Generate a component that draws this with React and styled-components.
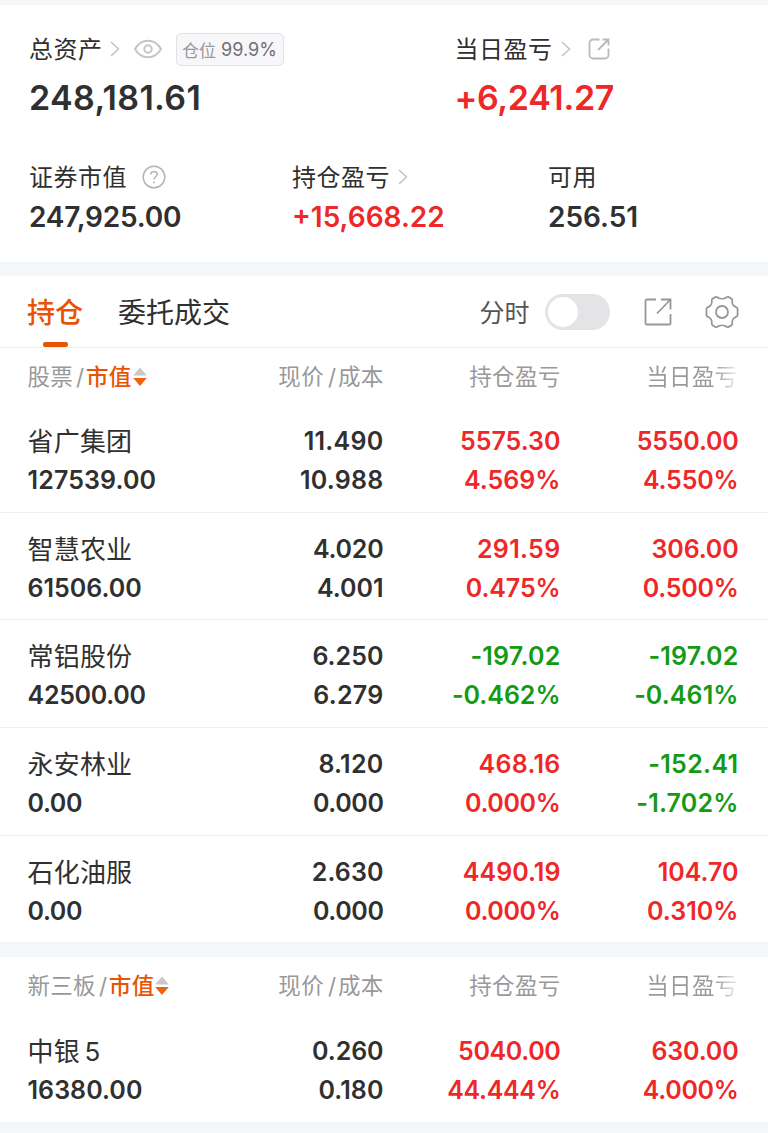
import React from "react";
import styled, { createGlobalStyle } from "styled-components";

const GlobalStyle = createGlobalStyle`
  * { box-sizing: border-box; }
  body {
    margin: 0;
    background: #f4f7f9;
    color: #303030;
    font-family: Inter, "Noto Sans CJK SC", sans-serif;
  }
  svg { display: block; flex: none; }
`;

const colors = { up: "#ee2829", down: "#159a15", flat: "#303030" };

const Screen = styled.main`
  width: 768px;
  height: 1133px;
  padding-top: 5px;
  overflow: hidden;
`;

const Summary = styled.section`
  height: 257px;
  padding: 24px 30px 0 29px;
  background: #fff;
`;

const SummaryRow = styled.div`
  display: grid;
  grid-template-columns: ${(p) => p.$columns};
  margin-bottom: ${(p) => p.$gap || 0}px;
`;

const Label = styled.div`
  display: flex;
  align-items: center;
  height: 40px;
  font-size: 24px;
  letter-spacing: 0.5px;
  white-space: nowrap;
`;

const LabelText = styled.span`
  padding-bottom: ${(p) => p.$lift || 3}px;
`;

const IconSlot = styled.span`
  margin-left: ${(p) => p.$space}px;
`;

const Amount = styled.div`
  height: ${(p) => (p.$large ? 58 : 40)}px;
  line-height: ${(p) => (p.$large ? 58 : 41)}px;
  font-size: ${(p) => (p.$large ? 34 : 28)}px;
  letter-spacing: ${(p) => p.$spacing || 0}px;
  font-weight: 600;
  color: ${(p) => colors[p.$tone || "flat"]};
`;

const Badge = styled.span`
  display: flex;
  align-items: center;
  justify-content: center;
  gap: 5px;
  width: 108px;
  height: 33px;
  margin-left: 14px;
  border: 1px solid #e2e2e6;
  border-radius: 5px;
  background: #f7f7fa;
  color: #999;
  font-size: 17px;
  letter-spacing: 0;
`;

const BadgeValue = styled.span`
  color: #707070;
  font-size: 18px;
`;

const Panel = styled.section`
  margin-top: ${(p) => p.$top}px;
  background: #fff;
`;

const TabBar = styled.div`
  display: flex;
  height: 72px;
  padding: 0 29px 0 27px;
  border-bottom: 1px solid #eeeff0;
`;

const Tab = styled.div`
  display: flex;
  flex-direction: column;
  align-items: center;
  justify-content: space-between;
  height: 71px;
  margin-right: 35px;
  font-size: 28px;
  line-height: 74px;
  font-weight: ${(p) => (p.$active ? 500 : 400)};
  color: ${(p) => (p.$active ? "#e85404" : "#303030")};
  &::after {
    content: "";
    display: ${(p) => (p.$active ? "block" : "none")};
    width: 25px;
    height: 5px;
    flex: none;
    border-radius: 2px;
    background: #e85404;
  }
`;

const TabText = styled.span`
  height: 66px;
`;

const Tools = styled.div`
  display: flex;
  align-items: center;
  margin-left: auto;
  color: #555;
  font-size: 25px;
`;

const Switch = styled.span`
  display: flex;
  width: 65px;
  height: 36px;
  margin: 0 34px 0 15px;
  padding: 3px;
  border-radius: 18px;
  background: #e4e4e6;
`;

const Knob = styled.span`
  width: 30px;
  height: 30px;
  border-radius: 50%;
  background: #fff;
`;

const Columns = styled.div`
  display: grid;
  grid-template-columns: 184px 172px 177px 178px;
  padding-left: 27.5px;
`;

const TableHead = styled(Columns)`
  height: ${(p) => (p.$tall ? 58 : 57)}px;
  line-height: 58px;
  color: #999;
  font-size: 22.5px;
  letter-spacing: 0.3px;
`;

const HeadCell = styled.div`
  display: flex;
  align-items: center;
  justify-content: ${(p) => (p.$start ? "flex-start" : "flex-end")};
  white-space: nowrap;
`;

const Slash = styled.span`
  margin: 0 1.5px 0 ${(p) => p.$gap || 3}px;
`;

const SortKey = styled.span`
  margin-right: 1px;
  color: #e85404;
  font-weight: 500;
`;

const Faded = styled.span`
  margin-right: 1px;
  background: linear-gradient(to right, #999 74%, rgba(153, 153, 153, 0.15) 100%);
  background-clip: text;
  color: transparent;
`;

const StockRow = styled(Columns)`
  height: ${(p) => (p.$last ? 106.7 : 107.7)}px;
  padding-top: 17px;
  border-bottom: ${(p) => (p.$last ? "none" : "1px solid #f0f1f2")};
`;

const Cell = styled.div`
  color: ${(p) => colors[p.$tone || "flat"]};
  text-align: ${(p) => (p.$start ? "left" : "right")};
  font-size: 25px;
  font-weight: 600;
  white-space: nowrap;
`;

const Line = styled.div`
  height: 39px;
  line-height: 39px;
  letter-spacing: ${(p) => p.$spacing || 0}px;
`;

const StockName = styled(Line)`
  font-size: 26px;
  font-weight: 400;
  letter-spacing: 0.2px;
  word-spacing: -3px;
`;

const Chevron = () => (
  <svg width="10" height="16" viewBox="0 0 10 16" fill="none" stroke="#c2c2c2" strokeWidth="1.5">
    <path d="M1 1l7.5 7L1 15" />
  </svg>
);

const Eye = () => (
  <svg width="28" height="20" viewBox="0 0 28 20" fill="none" stroke="#c5c5c5" strokeWidth="2">
    <path d="M1 10C4 4.7 8.6 1.7 14 1.7S24 4.7 27 10C24 15.300 19.400 18.300 14 18.300S4 15.300 1 10Z" />
    <circle cx="14" cy="10" r="3.700" />
  </svg>
);

const RoundedShare = () => (
  <svg width="22" height="22" viewBox="0 0 22 22" fill="none" stroke="#bababa" strokeWidth="1.8">
    <path d="M11.500 1.500H5A3.500 3.500 0 0 0 1.500 5v12A3.500 3.500 0 0 0 5 20.500h12a3.500 3.500 0 0 0 3.500-3.500v-6.500M14.500 1.500h6v6M20.500 1.500L10 12" />
  </svg>
);

const Help = () => (
  <svg width="24" height="24" viewBox="0 0 24 24" fill="none" stroke="#b5b5b5" strokeWidth="1.5">
    <circle cx="12" cy="12" r="10.800" />
    <path d="M8.800 9.500C8.800 7.500 10.200 6.400 12 6.400s3.200 1.100 3.200 2.900c0 2.400-3.200 2.500-3.200 5.200" />
    <circle cx="12" cy="17.200" r="1" fill="#b5b5b5" stroke="none" />
  </svg>
);

const Share = () => (
  <svg width="28" height="28" viewBox="0 0 28 28" fill="none" stroke="#979797" strokeWidth="1.800">
    <path d="M12 1.500H3a1.500 1.500 0 0 0-1.500 1.500v22A1.500 1.500 0 0 0 3 26.500h22.500A1 1 0 0 0 26.500 25.500V16M17 1.500h9.500v10M26 2L13 15.500" />
  </svg>
);

const Gear = () => (
  <svg width="34" height="34" viewBox="0 0 34 34" fill="none" stroke="#979797" strokeWidth="1.8" strokeLinejoin="round">
    <path d="M12.300 2.200C15 4.200 19 4.200 21.700 2.200Q22.700 1.500 23.700 2.100L26.300 3.600Q27.400 4.300 27.200 5.500C26.800 8.500 28.600 11.500 31.400 12.400Q32.600 12.900 32.600 14V20Q32.600 21.100 31.400 21.600C28.600 22.500 26.800 25.500 27.200 28.500Q27.400 29.700 26.300 30.400L23.700 31.900Q22.700 32.500 21.700 31.800C19 29.800 15 29.800 12.300 31.800Q11.300 32.500 10.300 31.900L7.700 30.400Q6.600 29.700 6.800 28.500C7.200 25.500 5.400 22.500 2.600 21.600Q1.400 21.100 1.400 20V14Q1.400 12.900 2.600 12.400C5.400 11.500 7.200 8.500 6.800 5.500Q6.600 4.300 7.700 3.600L10.300 2.100Q11.300 1.500 12.300 2.200Z" />
    <circle cx="17" cy="17" r="6" />
  </svg>
);

const Sort = () => (
  <svg width="14" height="20" viewBox="0 0 14 20">
    <path d="M7 .5L13.800 8.500H.2Z" fill="#c8c8c8" />
    <path d="M.2 11h13.600L7 19Z" fill="#f0630c" />
  </svg>
);

const Heading = ({ name, tall }) => (
  <TableHead $tall={tall}>
    <HeadCell $start>
      {name}
      <Slash>/</Slash>
      <SortKey>市值</SortKey>
      <Sort />
    </HeadCell>
    <HeadCell>现价<Slash $gap={4}>/</Slash>成本</HeadCell>
    <HeadCell>持仓盈亏</HeadCell>
    <HeadCell><Faded>当日盈亏</Faded></HeadCell>
  </TableHead>
);

const tracking = { 0: -0.8, 1: 0.8, 4: -0.7, 5: -0.3, "%": -0.4 };

const Figure = ({ children }) => {
  const total = [...children].reduce((sum, ch) => sum + (tracking[ch] || 0), 0);
  return <Line $spacing={0.25 + total / children.length}>{children}</Line>;
};

const Stock = ({ data, last }) => {
  const [name, value, price, cost, gain, gainRate, gainTone, day, dayRate, dayTone] = data;
  return (
    <StockRow $last={last}>
      <Cell $start>
        <StockName>{name}</StockName>
        <Figure>{value}</Figure>
      </Cell>
      <Cell><Figure>{price}</Figure><Figure>{cost}</Figure></Cell>
      <Cell $tone={gainTone}><Figure>{gain}</Figure><Figure>{gainRate}</Figure></Cell>
      <Cell $tone={dayTone}><Figure>{day}</Figure><Figure>{dayRate}</Figure></Cell>
    </StockRow>
  );
};

const stocks = [
  ["省广集团", "127539.00", "11.490", "10.988", "5575.30", "4.569%", "up", "5550.00", "4.550%", "up"],
  ["智慧农业", "61506.00", "4.020", "4.001", "291.59", "0.475%", "up", "306.00", "0.500%", "up"],
  ["常铝股份", "42500.00", "6.250", "6.279", "-197.02", "-0.462%", "down", "-197.02", "-0.461%", "down"],
  ["永安林业", "0.00", "8.120", "0.000", "468.16", "0.000%", "up", "-152.41", "-1.702%", "down"],
  ["石化油服", "0.00", "2.630", "0.000", "4490.19", "0.000%", "up", "104.70", "0.310%", "up"],
];
const neeq = ["中银 5", "16380.00", "0.260", "0.180", "5040.00", "44.444%", "up", "630.00", "4.000%", "up"];

export default function App() {
  return (
    <Screen>
      <GlobalStyle />
      <Summary>
        <SummaryRow $columns="425.5px 1fr" $gap={30}>
          <div>
            <Label>
              <LabelText>总资产</LabelText>
              <IconSlot $space={7}><Chevron /></IconSlot>
              <IconSlot $space={14}><Eye /></IconSlot>
              <Badge>仓位<BadgeValue>99.9%</BadgeValue></Badge>
            </Label>
            <Amount $large $spacing={0.35}>248,181.61</Amount>
          </div>
          <div>
            <Label>
              <LabelText>当日盈亏</LabelText>
              <IconSlot $space={8}><Chevron /></IconSlot>
              <IconSlot $space={17}><RoundedShare /></IconSlot>
            </Label>
            <Amount $large $tone="up" $spacing={-0.35}>+6,241.27</Amount>
          </div>
        </SummaryRow>
        <SummaryRow $columns="263px 256px 1fr">
          <div>
            <Label><LabelText>证券市值</LabelText><IconSlot $space={15}><Help /></IconSlot></Label>
            <Amount $spacing={-0.2}>247,925.00</Amount>
          </div>
          <div>
            <Label><LabelText>持仓盈亏</LabelText><IconSlot $space={8}><Chevron /></IconSlot></Label>
            <Amount $tone="up">+15,668.22</Amount>
          </div>
          <div>
            <Label><LabelText>可用</LabelText></Label>
            <Amount>256.51</Amount>
          </div>
        </SummaryRow>
      </Summary>
      <Panel $top={14}>
        <TabBar>
          <Tab $active><TabText>持仓</TabText></Tab>
          <Tab><TabText>委托成交</TabText></Tab>
          <Tools>
            <LabelText $lift={2}>分时</LabelText>
            <Switch><Knob /></Switch>
            <Share />
            <IconSlot $space={33.5}><Gear /></IconSlot>
          </Tools>
        </TabBar>
        <Heading name="股票" />
        {stocks.map((s, i) => <Stock key={s[0]} data={s} last={i === stocks.length - 1} />)}
      </Panel>
      <Panel $top={15}>
        <Heading name="新三板" tall />
        <Stock data={neeq} last />
      </Panel>
    </Screen>
  );
}
